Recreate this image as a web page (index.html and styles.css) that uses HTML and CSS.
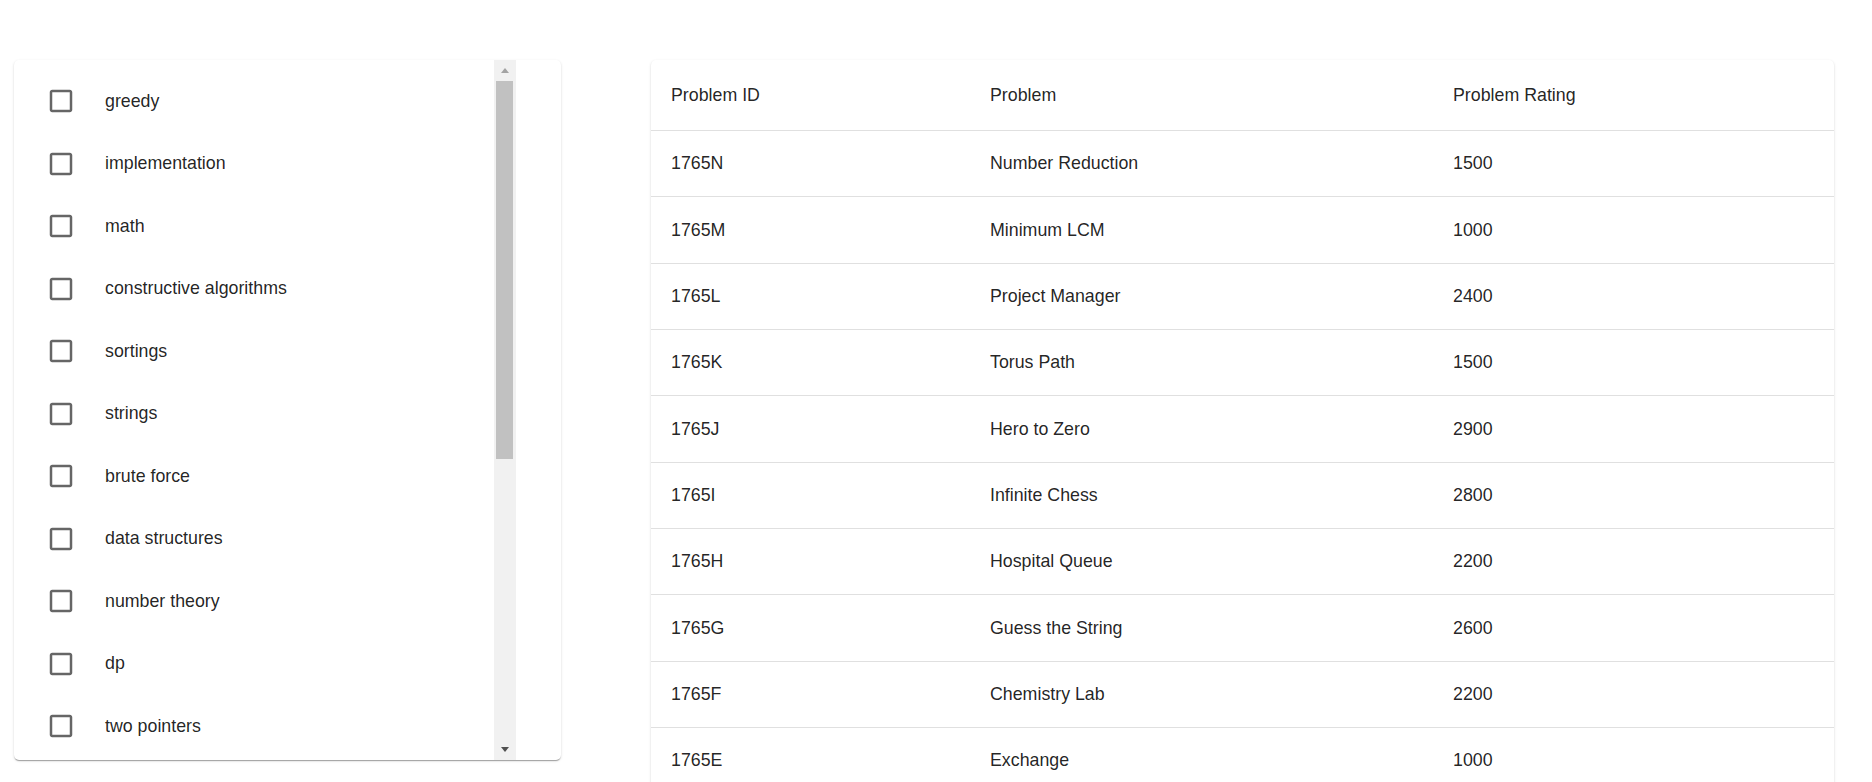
FILE: index.html
```html
<!DOCTYPE html>
<html lang="en">
<head>
<meta charset="utf-8">
<title>Problems</title>
<link rel="stylesheet" href="styles.css">
</head>
<body>
<main class="layout">
  <section class="tag-card">
    <ul class="tag-list">
      <li class="tag-item"><svg class="cb" viewBox="0 0 24 24"><path d="M19 5v14H5V5h14m0-2H5c-1.11 0-2 .9-2 2v14c0 1.1.89 2 2 2h14c1.1 0 2-.9 2-2V5c0-1.1-.9-2-2-2z"/></svg><span class="tag-label">greedy</span></li>
      <li class="tag-item"><svg class="cb" viewBox="0 0 24 24"><path d="M19 5v14H5V5h14m0-2H5c-1.11 0-2 .9-2 2v14c0 1.1.89 2 2 2h14c1.1 0 2-.9 2-2V5c0-1.1-.9-2-2-2z"/></svg><span class="tag-label">implementation</span></li>
      <li class="tag-item"><svg class="cb" viewBox="0 0 24 24"><path d="M19 5v14H5V5h14m0-2H5c-1.11 0-2 .9-2 2v14c0 1.1.89 2 2 2h14c1.1 0 2-.9 2-2V5c0-1.1-.9-2-2-2z"/></svg><span class="tag-label">math</span></li>
      <li class="tag-item"><svg class="cb" viewBox="0 0 24 24"><path d="M19 5v14H5V5h14m0-2H5c-1.11 0-2 .9-2 2v14c0 1.1.89 2 2 2h14c1.1 0 2-.9 2-2V5c0-1.1-.9-2-2-2z"/></svg><span class="tag-label">constructive algorithms</span></li>
      <li class="tag-item"><svg class="cb" viewBox="0 0 24 24"><path d="M19 5v14H5V5h14m0-2H5c-1.11 0-2 .9-2 2v14c0 1.1.89 2 2 2h14c1.1 0 2-.9 2-2V5c0-1.1-.9-2-2-2z"/></svg><span class="tag-label">sortings</span></li>
      <li class="tag-item"><svg class="cb" viewBox="0 0 24 24"><path d="M19 5v14H5V5h14m0-2H5c-1.11 0-2 .9-2 2v14c0 1.1.89 2 2 2h14c1.1 0 2-.9 2-2V5c0-1.1-.9-2-2-2z"/></svg><span class="tag-label">strings</span></li>
      <li class="tag-item"><svg class="cb" viewBox="0 0 24 24"><path d="M19 5v14H5V5h14m0-2H5c-1.11 0-2 .9-2 2v14c0 1.1.89 2 2 2h14c1.1 0 2-.9 2-2V5c0-1.1-.9-2-2-2z"/></svg><span class="tag-label">brute force</span></li>
      <li class="tag-item"><svg class="cb" viewBox="0 0 24 24"><path d="M19 5v14H5V5h14m0-2H5c-1.11 0-2 .9-2 2v14c0 1.1.89 2 2 2h14c1.1 0 2-.9 2-2V5c0-1.1-.9-2-2-2z"/></svg><span class="tag-label">data structures</span></li>
      <li class="tag-item"><svg class="cb" viewBox="0 0 24 24"><path d="M19 5v14H5V5h14m0-2H5c-1.11 0-2 .9-2 2v14c0 1.1.89 2 2 2h14c1.1 0 2-.9 2-2V5c0-1.1-.9-2-2-2z"/></svg><span class="tag-label">number theory</span></li>
      <li class="tag-item"><svg class="cb" viewBox="0 0 24 24"><path d="M19 5v14H5V5h14m0-2H5c-1.11 0-2 .9-2 2v14c0 1.1.89 2 2 2h14c1.1 0 2-.9 2-2V5c0-1.1-.9-2-2-2z"/></svg><span class="tag-label">dp</span></li>
      <li class="tag-item"><svg class="cb" viewBox="0 0 24 24"><path d="M19 5v14H5V5h14m0-2H5c-1.11 0-2 .9-2 2v14c0 1.1.89 2 2 2h14c1.1 0 2-.9 2-2V5c0-1.1-.9-2-2-2z"/></svg><span class="tag-label">two pointers</span></li>
    </ul>
    <div class="scrollbar" aria-hidden="true">
      <div class="sb-btn"><span class="arrow-up"></span></div>
      <div class="sb-track">
        <div class="sb-thumb"></div>
      </div>
      <div class="sb-btn"><span class="arrow-down"></span></div>
    </div>
  </section>

  <section class="table-card">
    <table class="problems">
      <colgroup>
        <col class="c-id">
        <col class="c-name">
        <col class="c-rating">
      </colgroup>
      <thead>
        <tr><th>Problem ID</th><th>Problem</th><th>Problem Rating</th></tr>
      </thead>
      <tbody>
        <tr><td>1765N</td><td>Number Reduction</td><td>1500</td></tr>
        <tr><td>1765M</td><td>Minimum LCM</td><td>1000</td></tr>
        <tr><td>1765L</td><td>Project Manager</td><td>2400</td></tr>
        <tr><td>1765K</td><td>Torus Path</td><td>1500</td></tr>
        <tr><td>1765J</td><td>Hero to Zero</td><td>2900</td></tr>
        <tr><td>1765I</td><td>Infinite Chess</td><td>2800</td></tr>
        <tr><td>1765H</td><td>Hospital Queue</td><td>2200</td></tr>
        <tr><td>1765G</td><td>Guess the String</td><td>2600</td></tr>
        <tr><td>1765F</td><td>Chemistry Lab</td><td>2200</td></tr>
        <tr><td>1765E</td><td>Exchange</td><td>1000</td></tr>
      </tbody>
    </table>
  </section>
</main>
</body>
</html>
```

FILE: styles.css
```css
html, body {
  margin: 0;
  padding: 0;
  height: 100%;
  overflow: hidden;
  background: #ffffff;
}

body {
  font-family: "Liberation Sans", Arial, Helvetica, sans-serif;
  font-size: 17.8px;
  color: rgba(0, 0, 0, 0.87);
}

.layout {
  display: flex;
  align-items: flex-start;
  gap: 90px;
  padding: 60px 0 0 14px;
}

/* ---------- tag list card ---------- */
.tag-card {
  width: 547px;
  height: 700px;
  flex: none;
  display: flex;
  background: #fff;
  border-radius: 5px;
  box-shadow: 0 2px 1px -1px rgba(0,0,0,0.2), 0 1px 1px 0 rgba(0,0,0,0.14), 0 1px 3px 0 rgba(0,0,0,0.12);
  overflow: hidden;
}

.tag-list {
  list-style: none;
  margin: 0;
  padding: 10px 0 0 0;
  width: 480px;
  height: 700px;
  box-sizing: border-box;
  overflow: hidden;
  flex: none;
}

.tag-item {
  display: flex;
  align-items: center;
  height: 62.5px;
  padding-left: 32px;
  line-height: 1.5;
}

.cb {
  width: 30px;
  height: 30px;
  flex: none;
  fill: rgba(0, 0, 0, 0.6);
}

.tag-label {
  margin-left: 29px;
}

/* classic scrollbar look */
.scrollbar {
  width: 22px;
  height: 700px;
  flex: none;
  display: flex;
  flex-direction: column;
  background: #f1f1f1;
}

.sb-btn {
  height: 21px;
  flex: none;
  display: flex;
  align-items: center;
  justify-content: center;
}

.arrow-up {
  width: 0;
  height: 0;
  border-left: 4.5px solid transparent;
  border-right: 4.5px solid transparent;
  border-bottom: 5px solid #a3a3a3;
}

.arrow-down {
  width: 0;
  height: 0;
  border-left: 4.5px solid transparent;
  border-right: 4.5px solid transparent;
  border-top: 5px solid #505050;
}

.sb-track {
  flex: 1;
  padding: 0 3px 0 2px;
}

.sb-thumb {
  height: 378px;
  background: #c1c1c1;
}

/* ---------- problems table card ---------- */
.table-card {
  width: 1183px;
  flex: none;
  background: #fff;
  border-radius: 5px;
  box-shadow: 0 2px 1px -1px rgba(0,0,0,0.2), 0 1px 1px 0 rgba(0,0,0,0.14), 0 1px 3px 0 rgba(0,0,0,0.12);
  overflow: hidden;
}

.problems {
  width: 100%;
  border-collapse: collapse;
  table-layout: fixed;
}

.c-id { width: 319px; }
.c-name { width: 463px; }
.c-rating { width: 401px; }

.problems th,
.problems td {
  text-align: left;
  font-weight: 400;
  padding: 0 20px;
  border-bottom: 1px solid #e0e0e0;
  line-height: 25px;
}

.problems th {
  height: 70px;
}

.problems td {
  height: 65.35px;
}
```
